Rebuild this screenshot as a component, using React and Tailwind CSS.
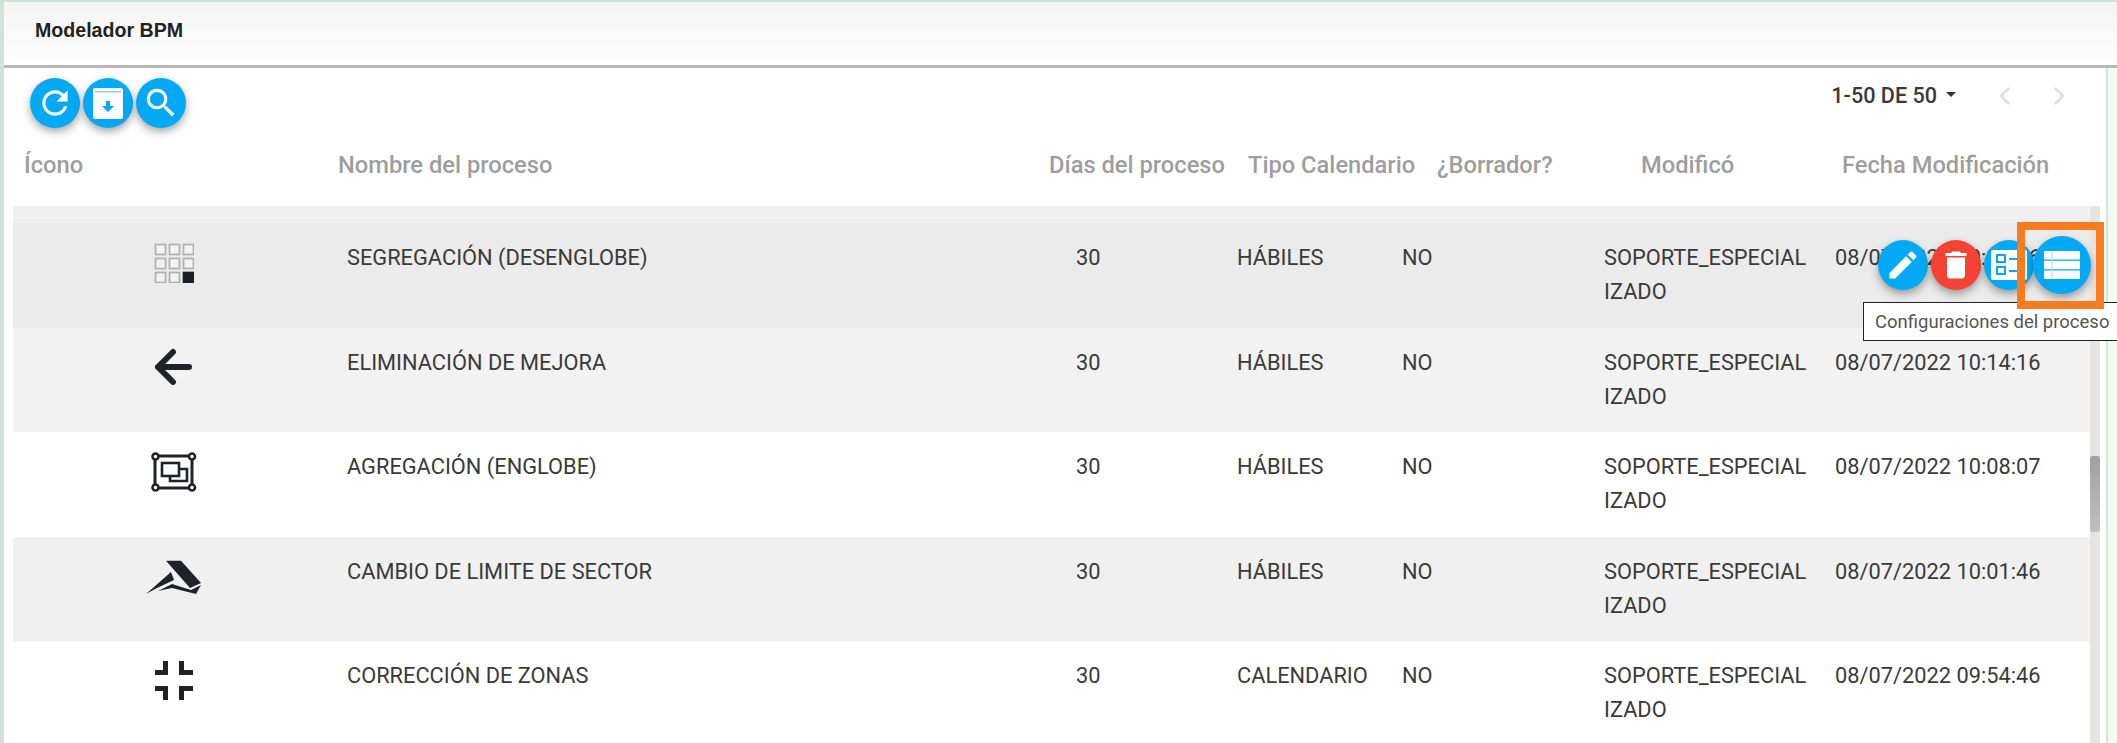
import React from "react";

const Blue = "bg-[#03a9f4]";
const Fab = ({ children, cls = "" }) => (
  <div className={`flex items-center justify-center rounded-full shadow-[0_4px_8px_rgba(0,0,0,0.35)] ${cls}`}>{children}</div>
);
const P = ({ d, s = 30 }) => (
  <svg width={s} height={s} viewBox="0 0 24 24" fill="#fff"><path d={d} /></svg>
);

const GridIcon = () => (
  <svg width="40" height="40" viewBox="0 0 40 40">
    {[0, 1, 2].flatMap((r) =>
      [0, 1, 2].map((c) => (
        <rect key={`${r}${c}`} x={1.5 + c * 14} y={1.5 + r * 14} width="10" height="10"
          fill={r === 2 && c === 2 ? "#1b1f24" : "#f2f2f2"}
          stroke={r === 2 && c === 2 ? "#1b1f24" : "#b0b0b0"} strokeWidth="1.700" />
      ))
    )}
  </svg>
);
const ArrowIcon = () => (
  <svg width="40" height="40" viewBox="0 0 40 40" fill="none" stroke="#1f2329" strokeWidth="6" strokeLinecap="round" strokeLinejoin="round">
    <path d="M35 19H4M19 4L4 19l15 15" />
  </svg>
);
const SelectIcon = () => (
  <svg width="46" height="42" viewBox="0 0 46 42" fill="none" stroke="#1f2329">
    <rect x="4" y="4" width="37" height="32" strokeWidth="3" />
    <circle cx="4.500" cy="4.500" r="3" fill="#fff" strokeWidth="2.600" />
    <circle cx="41" cy="4.500" r="3" fill="#fff" strokeWidth="2.600" />
    <circle cx="4.500" cy="35.500" r="3" fill="#fff" strokeWidth="2.600" />
    <circle cx="41" cy="35.500" r="3" fill="#fff" strokeWidth="2.600" />
    <rect x="11" y="11" width="17" height="13" strokeWidth="2.600" />
    <path d="M28 17h8v12H19v-5" strokeWidth="2.600" />
  </svg>
);
const MountainIcon = () => (
  <svg width="56" height="39" viewBox="0 -3 56 39" fill="#1f2329">
    <path d="M20 .7h15L55 23l-11 5z" />
    <path d="M25 12l3 8-17 8L0 34z" />
    <path d="M12 31l14-7 19 6 10-5-5 9-24-6z" />
  </svg>
);
const CompressIcon = () => (
  <svg width="40" height="40" viewBox="-1 0 40 40" fill="#1f2329">
    <path d="M8 0h5v14H0V9h8zM24 0h5v9h9v5H24zM0 25h13v14H8v-9H0zM24 25h14v5h-9v9h-5z" />
  </svg>
);

const rows = [
  { icon: <GridIcon />, name: "SEGREGACIÓN (DESENGLOBE)", tipo: "HÁBILES", date: "08/07/2022 10:20:16", bg: "bg-[#ebebeb]" },
  { icon: <ArrowIcon />, name: "ELIMINACIÓN DE MEJORA", tipo: "HÁBILES", date: "08/07/2022 10:14:16", bg: "bg-[#f2f2f2]" },
  { icon: <SelectIcon />, name: "AGREGACIÓN (ENGLOBE)", tipo: "HÁBILES", date: "08/07/2022 10:08:07", bg: "bg-white" },
  { icon: <MountainIcon />, name: "CAMBIO DE LIMITE DE SECTOR", tipo: "HÁBILES", date: "08/07/2022 10:01:46", bg: "bg-[#f0f0f0]" },
  { icon: <CompressIcon />, name: "CORRECCIÓN DE ZONAS", tipo: "CALENDARIO", date: "08/07/2022 09:54:46", bg: "bg-white" },
];

const Row = ({ r, children }) => (
  <div className={`relative grid h-[104.500px] shrink-0 grid-cols-[334px_729px_161px_165px_202px_231px_1fr] pt-[18px] text-[21.800px] leading-[34px] text-[#3a3a3a] ${r.bg}`}>
    <div className="mt-[2px] flex w-[322px] justify-center">{r.icon}</div>
    <div>{r.name}</div>
    <div>30</div>
    <div>{r.tipo}</div>
    <div>NO</div>
    <div>SOPORTE_ESPECIAL<br />IZADO</div>
    <div className="whitespace-nowrap">{r.date}</div>
    {children}
  </div>
);

export default function App() {
  return (
    <div className="flex h-[743px] w-[2117px] flex-col overflow-hidden border-t-2 border-l-4 border-[#cfe3d6] bg-[#f1fbf3] font-['Roboto',sans-serif]">
      <header className="flex h-[66px] shrink-0 items-center border-b-[3px] border-[#b8b8b8] bg-gradient-to-b from-[#f4f4f4] to-white pl-[31px] pb-[6px] font-['Liberation_Sans',sans-serif] text-[19.600px] font-bold text-[#222]">
        Modelador BPM
      </header>
      <main className="mr-[9px] flex min-h-0 flex-1 flex-col border-r-2 border-[#d3e4d9] bg-white">
        <div className="flex h-[75px] shrink-0 justify-between pt-[10px] pl-[26px]">
          <div className="flex gap-[3px]">
            <Fab cls={`h-[50px] w-[50px] ${Blue}`}>
              <P s={38} d="M17.65 6.350C16.200 4.900 14.210 4 12 4c-4.420 0-7.990 3.580-7.990 8s3.570 8 7.990 8c3.730 0 6.840-2.550 7.730-6h-2.080c-.82 2.330-3.040 4-5.650 4-3.310 0-6-2.690-6-6s2.690-6 6-6c1.660 0 3.140.69 4.220 1.780L13 11h7V4l-2.350 2.350z" />
            </Fab>
            <Fab cls={`h-[50px] w-[50px] ${Blue}`}>
              <svg width="30" height="31" viewBox="0 0 30 31">
                <rect x="0" y="0" width="30" height="31" rx="2" fill="#fff" />
                <rect x="2" y="3" width="26" height="1.500" fill="#7fd3f9" />
                <path d="M13 13h4v5h4l-6 6-6-6h4z" fill="#03a9f4" />
              </svg>
            </Fab>
            <Fab cls={`h-[50px] w-[50px] ${Blue}`}>
              <P s={38} d="M15.500 14h-.79l-.28-.27C15.410 12.590 16 11.110 16 9.500 16 5.910 13.090 3 9.500 3S3 5.910 3 9.500 5.910 16 9.500 16c1.610 0 3.090-.59 4.230-1.570l.27.28v.79l5 4.990L20.490 19l-4.990-5zm-6 0C7.010 14 5 11.990 5 9.500S7.010 5 9.500 5 14 7.010 14 9.500 11.990 14 9.500 14z" />
            </Fab>
          </div>
          <div className="flex h-[32px] items-center pt-[4px] text-[21.600px] text-[#3a3a3a]">
            <span className="font-medium">1-50 DE 50</span>
            <span className="mb-[4px] ml-[9px] h-0 w-0 border-x-[5px] border-t-[5px] border-x-transparent border-t-[#333]" />
            <svg className="ml-[41px]" width="16" height="20" viewBox="0 0 16 20" fill="none" stroke="#d8d8d8" strokeWidth="2"><path d="M12 2L4 10l8 8" /></svg>
            <svg className="ml-[38px] mr-[39px]" width="16" height="20" viewBox="0 0 16 20" fill="none" stroke="#d8d8d8" strokeWidth="2"><path d="M4 2l8 8-8 8" /></svg>
          </div>
        </div>
        <div className="grid h-[63px] shrink-0 grid-cols-[314px_711px_199px_189px_204px_201px_1fr] pt-[7px] pl-[20px] text-[23.700px] leading-[30px] font-medium whitespace-nowrap text-[#9e9e9e]">
          <div>Ícono</div>
          <div>Nombre del proceso</div>
          <div>Días del proceso</div>
          <div>Tipo Calendario</div>
          <div>¿Borrador?</div>
          <div>Modificó</div>
          <div>Fecha Modificación</div>
        </div>
        <div className="flex min-h-0 flex-1 pl-[9px]">
          <div className="flex w-[2077px] flex-col">
            <div className="h-[17px] shrink-0 bg-[#f0f0f0]" />
            {rows.map((r, i) => (
              <Row key={r.name} r={r}>
                {i === 0 && (
                  <>
                    <div className="absolute top-[17px] left-[1865px] flex items-center">
                      <Fab cls={`h-[50px] w-[50px] ${Blue}`}>
                        <P s={36} d="M3 17.250V21h3.750L17.810 9.940l-3.750-3.750L3 17.250zM20.710 7.040c.39-.39.39-1.020 0-1.410l-2.340-2.340c-.39-.39-1.020-.39-1.410 0l-1.830 1.830 3.750 3.750 1.830-1.830z" />
                      </Fab>
                      <Fab cls="ml-[3px] h-[50px] w-[50px] bg-[#f44336]">
                        <P s={36} d="M6 19c0 1.100.9 2 2 2h8c1.100 0 2-.9 2-2V7H6v12zM19 4h-3.500l-1-1h-5l-1 1H5v2h14V4z" />
                      </Fab>
                      <Fab cls={`ml-[3px] h-[50px] w-[50px] ${Blue}`}>
                        <svg width="36" height="30" viewBox="0 0 36 30">
                          <rect width="36" height="30" rx="2" fill="#fff" />
                          <rect x="6" y="5" width="8" height="7" fill="none" stroke="#03a9f4" strokeWidth="2" />
                          <rect x="6" y="17" width="8" height="7" fill="none" stroke="#03a9f4" strokeWidth="2" />
                          <path d="M18 9h12M18 21h12" stroke="#03a9f4" strokeWidth="2" />
                        </svg>
                      </Fab>
                    </div>
                    <Fab cls={`absolute top-[13px] left-[2020px] z-10 h-[58px] w-[58px] ${Blue}`}>
                      <svg width="36" height="28" viewBox="0 0 36 28" fill="#fff">
                        <rect width="36" height="8.500" rx="1" />
                        <rect y="9.750" width="36" height="8.500" />
                        <rect y="19.500" width="36" height="8.500" rx="1" />
                        <path d="M8 0v28" stroke="#9bdcfa" strokeWidth="1" />
                      </svg>
                    </Fab>
                    <div className="absolute top-[-1px] left-[2004px] z-20 h-[87px] w-[87px] border-[8px] border-[#f97b20]" />
                    <div className="absolute top-[79px] left-[1850px] z-10 flex h-[39px] w-[254px] items-center border border-r-0 border-[#222] bg-white pl-[11px] text-[18.500px] whitespace-nowrap text-[#555]">
                      Configuraciones del proceso
                    </div>
                  </>
                )}
              </Row>
            ))}
          </div>
          <div className="w-[10px] shrink-0 bg-[#e6e3e3] pt-[250px]">
            <div className="h-[76px] rounded-[3px] bg-gradient-to-b from-[#a0a0a0] to-[#c0c0c0]" />
          </div>
        </div>
      </main>
    </div>
  );
}
